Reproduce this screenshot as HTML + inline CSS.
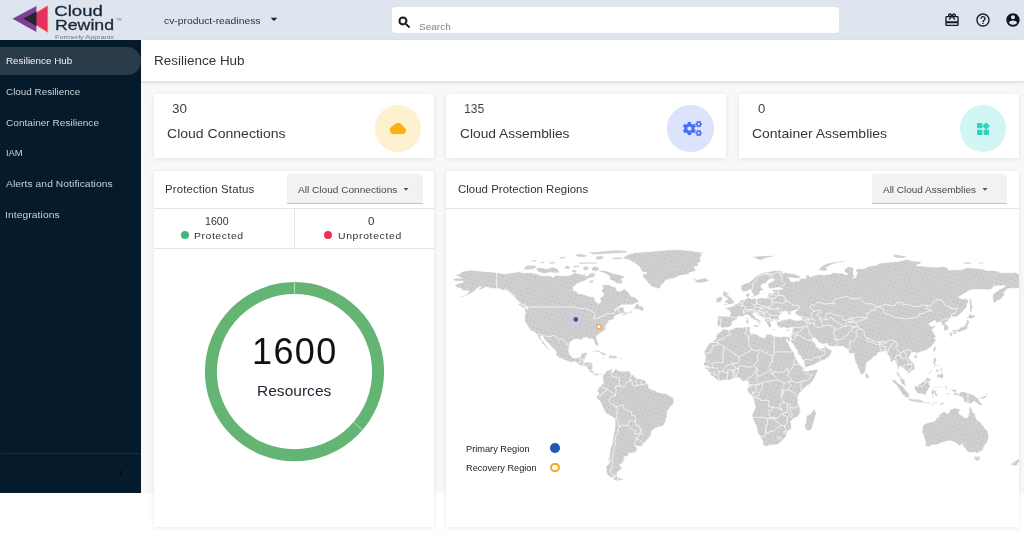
<!DOCTYPE html>
<html lang="en">
<head>
<meta charset="utf-8">
<title>Cloud Rewind - Resilience Hub</title>
<style>
*{box-sizing:border-box;margin:0;padding:0}
html,body{width:1024px;height:556px;overflow:hidden;background:#fff}
body{font-family:"Liberation Sans",sans-serif;color:#333;position:relative}
.abs{position:absolute}
.t{position:absolute;white-space:nowrap;line-height:1;transform-origin:0 0;will-change:transform}
#header{position:absolute;left:0;top:0;width:1024px;height:40px;background:#dfe5ee}
#sidebar{position:absolute;left:0;top:40px;width:141px;height:453px;background:#051b2b}
#main{position:absolute;left:141px;top:40px;width:883px;height:453px;background:#f8f8f8}
#titlebar{position:absolute;left:141px;top:40px;width:883px;height:41.5px;background:#fff;border-bottom:1px solid #e2e2e2;box-shadow:0 1px 3px rgba(0,0,0,.10)}
.card{position:absolute;background:#fff;box-shadow:0 1px 5px rgba(0,0,0,.09)}
.nav{position:absolute;left:6px;color:#c9d1d8;font-size:9px;white-space:nowrap;line-height:1;transform-origin:0 0;will-change:transform}
.circ{position:absolute;width:46.4px;height:46.4px;border-radius:50%}
.dd{position:absolute;background:#f2f2f2;border-bottom:1.3px solid #c4c4c4;border-radius:3px 3px 0 0}
svg{display:block}
</style>
</head>
<body>
<!-- ============ HEADER ============ -->
<div id="header">
  <svg class="abs" style="left:0;top:0;will-change:transform" width="130" height="40" viewBox="0 0 130 40"><defs><pattern id="lgdots" width="1.3" height="1.3" patternUnits="userSpaceOnUse"><circle cx=".65" cy=".65" r=".42" fill="#0c0c10"/></pattern></defs>
    <polygon points="26,18.8 47.8,5.6 47.8,32.4" fill="#e8305f" stroke="#f5a04a" stroke-width=".6"/>
    <polygon points="12.5,18.8 36.4,5.9 36.4,32" fill="#7d3f98"/>
    <polygon points="23.2,18.8 36.4,11.5 36.4,26" fill="#3a2f3c"/><polygon points="23.2,18.8 36.4,11.5 36.4,26" fill="url(#lgdots)"/>
    <text x="54.3" y="15.7" font-family="Liberation Sans, sans-serif" font-size="14" fill="#16283a" stroke="#16283a" stroke-width=".28" textLength="48.6" lengthAdjust="spacingAndGlyphs">Cloud</text>
    <text x="55" y="29.8" font-family="Liberation Sans, sans-serif" font-size="14" fill="#16283a" stroke="#16283a" stroke-width=".28" textLength="59" lengthAdjust="spacingAndGlyphs">Rewind</text>
    <text x="116.3" y="20.6" font-family="Liberation Sans, sans-serif" font-size="3.4" fill="#6a7683" textLength="5.2" lengthAdjust="spacingAndGlyphs">TM</text>
    <text x="55" y="38.9" font-family="Liberation Sans, sans-serif" font-size="5.3" fill="#6a727b" textLength="59" lengthAdjust="spacingAndGlyphs">Formerly Appranix</text>
  </svg>
  <span class="t" id="t_proj" style="left:164.40px;top:16.06px;font-size:9.5px;color:#2a3440;letter-spacing:0.000px;transform:scaleX(1.0877)">cv-product-readiness</span>
  <svg class="abs" style="left:266px;top:11px" width="16" height="16" viewBox="0 0 24 24" fill="#10202e"><path d="m7 10 5 5 5-5z"/></svg>
  <div class="abs" style="left:392px;top:7px;width:447px;height:26px;background:#fff;border-radius:4px"></div>
  <svg class="abs" style="left:397.4px;top:14.9px" width="15" height="15" viewBox="0 0 24 24" fill="#10181f"><path d="M15.5 14h-.79l-.28-.27A6.471 6.471 0 0 0 16 9.5 6.5 6.5 0 1 0 9.500 16c1.610 0 3.090-.59 4.230-1.570l.27.28v.79l5 4.990L20.490 19l-4.990-5zm-6 0C7.010 14 5 11.990 5 9.500S7.010 5 9.500 5 14 7.010 14 9.500 11.990 14 9.500 14z" stroke="#10181f" stroke-width="1.2"/></svg>
  <span class="t" id="t_search" style="left:418.80px;top:22.58px;font-size:9px;color:#7d8288;letter-spacing:0.000px;transform:scaleX(1.1146)">Search</span>
  <svg class="abs" style="left:943.6px;top:11.6px" width="16" height="16" viewBox="0 0 24 24" fill="#0f1d2b"><path d="M20 6h-2.180c.11-.31.18-.65.18-1a2.996 2.996 0 0 0-5.500-1.650l-.5.67-.5-.68C10.960 2.540 10.050 2 9 2 7.340 2 6 3.340 6 5c0 .35.07.69.18 1H4c-1.110 0-1.990.89-1.990 2L2 19c0 1.110.89 2 2 2h16c1.110 0 2-.89 2-2V8c0-1.110-.89-2-2-2zm-5-2c.55 0 1 .45 1 1s-.45 1-1 1-1-.45-1-1 .45-1 1-1zM9 4c.55 0 1 .45 1 1s-.45 1-1 1-1-.45-1-1 .45-1 1-1zm11 15H4v-2h16v2zm0-5H4V8h5.080L7 10.830 8.620 12 11 8.760l1-1.360 1 1.360L15.380 12 17 10.830 14.920 8H20v6z"/></svg>
  <svg class="abs" style="left:974.8px;top:11.8px" width="16" height="16" viewBox="0 0 24 24" fill="#0f1d2b"><path d="M11 18h2v-2h-2v2zm1-16C6.480 2 2 6.480 2 12s4.480 10 10 10 10-4.480 10-10S17.520 2 12 2zm0 18c-4.410 0-8-3.590-8-8s3.590-8 8-8 8 3.590 8 8-3.590 8-8 8zm0-14c-2.210 0-4 1.790-4 4h2c0-1.100.9-2 2-2s2 .9 2 2c0 2-3 1.750-3 5h2c0-2.250 3-2.500 3-5 0-2.210-1.790-4-4-4z"/></svg>
  <svg class="abs" style="left:1005px;top:11.8px" width="16" height="16" viewBox="0 0 24 24" fill="#0b1826"><path d="M12 2C6.480 2 2 6.480 2 12s4.480 10 10 10 10-4.480 10-10S17.520 2 12 2zm0 3c1.660 0 3 1.340 3 3s-1.340 3-3 3-3-1.340-3-3 1.340-3 3-3zm0 14.200c-2.500 0-4.710-1.280-6-3.220.03-1.990 4-3.080 6-3.080 1.990 0 5.970 1.090 6 3.080-1.290 1.940-3.500 3.220-6 3.220z"/></svg>
</div>

<!-- ============ SIDEBAR ============ -->
<div id="sidebar">
  <div class="abs" style="left:0;top:6.6px;width:140.5px;height:28.4px;background:#2a3b4a;border-radius:0 14.2px 14.2px 0"></div>
  <span class="nav" id="n1" style="top:16.61px;color:#f2f4f6;left:5.80px;font-size:9.2px;letter-spacing:0.000px;transform:scaleX(1.0713)">Resilience Hub</span>
  <span class="nav" id="n2" style="top:48.11px;left:6.00px;font-size:9.2px;letter-spacing:0.000px;transform:scaleX(1.0775)">Cloud Resilience</span>
  <span class="nav" id="n3" style="top:78.91px;left:6.00px;font-size:9.2px;letter-spacing:0.000px;transform:scaleX(1.0969)">Container Resilience</span>
  <span class="nav" id="n4" style="top:108.51px;left:6.00px;font-size:9.2px;letter-spacing:0.000px;transform:scaleX(1.0218)">IAM</span>
  <span class="nav" id="n5" style="top:140.21px;left:6.00px;font-size:9.2px;letter-spacing:0.053px;transform:scaleX(1.1200)">Alerts and Notifications</span>
  <span class="nav" id="n6" style="top:170.71px;left:5.00px;font-size:9.2px;letter-spacing:0.075px;transform:scaleX(1.1200)">Integrations</span>
  <div class="abs" style="left:0;top:412.5px;width:141px;height:0;border-top:1px dotted #2a3a47"></div>
  <svg class="abs" style="left:115px;top:427px" width="12" height="12" viewBox="0 0 24 24" fill="#02080d"><path d="M15.410 7.410 14 6l-6 6 6 6 1.410-1.410L10.830 12z"/></svg>
</div>

<!-- ============ MAIN ============ -->
<div id="main"></div>
<div id="titlebar"></div>
<span class="t" id="t_title" style="left:153.60px;top:55.24px;font-size:12px;color:#2f3439;letter-spacing:0.013px;transform:scaleX(1.1200)">Resilience Hub</span>

<!-- stat cards -->
<div class="card" style="left:154px;top:94.4px;width:280px;height:63.2px"></div>
<div class="card" style="left:446.3px;top:94.4px;width:280px;height:63.2px"></div>
<div class="card" style="left:739.2px;top:94.4px;width:279.6px;height:63.2px"></div>

<span class="t" id="t_30" style="left:172.40px;top:101.80px;font-size:13px;color:#3a3d41;letter-spacing:-0.000px;transform:scaleX(1.0367)">30</span>
<span class="t" id="t_cc" style="left:167.20px;top:126.70px;font-size:13px;color:#34373b;letter-spacing:-0.000px;transform:scaleX(1.0796)">Cloud Connections</span>
<div class="circ" style="left:375.1px;top:105.3px;background:#fef1d0"></div>
<svg class="abs" style="left:383px;top:116px" width="30" height="24" viewBox="0 0 30 24"><path d="M13.6 7.6 L16.8 7.6 L22.3 13.2 L22.5 15.4 L20.7 17.5 L9.6 17.5 L7.8 15.9 L7.5 12.6 L9.2 10.6 Z" fill="#fbb116" stroke="#fbb116" stroke-width="1.1" stroke-linejoin="round"/></svg>

<span class="t" id="t_135" style="left:464.30px;top:101.80px;font-size:13px;color:#3a3d41;letter-spacing:0.000px;transform:scaleX(0.9307)">135</span>
<span class="t" id="t_ca" style="left:459.80px;top:126.70px;font-size:13px;color:#34373b;letter-spacing:0.000px;transform:scaleX(1.0597)">Cloud Assemblies</span>
<div class="circ" style="left:667.4px;top:105.3px;background:#dbe3fd"></div>
<svg class="abs" style="left:683px;top:121px" width="19" height="15.2" viewBox="0 0 640 512" fill="#4b6ef5"><path d="M512.100 191l-8.200 14.300c-3 5.300-9.400 7.500-15.100 5.400-11.800-4.400-22.600-10.700-32.100-18.600-4.600-3.800-5.800-10.500-2.800-15.700l8.200-14.300c-6.900-8-12.300-17.300-15.900-27.400h-16.500c-6 0-11.200-4.300-12.200-10.300-2-12-2.100-24.600 0-37.100 1-6 6.200-10.400 12.200-10.400h16.500c3.600-10.100 9-19.400 15.900-27.400l-8.200-14.300c-3-5.200-1.900-11.900 2.800-15.700 9.500-7.900 20.400-14.200 32.100-18.600 5.700-2.100 12.100.1 15.100 5.400l8.200 14.300c10.500-1.900 21.200-1.900 31.700 0L552 6.300c3-5.300 9.400-7.500 15.100-5.400 11.800 4.400 22.600 10.700 32.100 18.600 4.600 3.800 5.800 10.500 2.800 15.700l-8.200 14.300c6.900 8 12.300 17.300 15.900 27.400h16.500c6 0 11.200 4.300 12.200 10.300 2 12 2.100 24.600 0 37.100-1 6-6.200 10.400-12.200 10.400h-16.500c-3.600 10.100-9 19.400-15.900 27.400l8.200 14.300c3 5.200 1.900 11.900-2.800 15.700-9.500 7.900-20.400 14.200-32.100 18.600-5.700 2.100-12.100-.1-15.100-5.400l-8.200-14.300c-10.400 1.900-21.200 1.900-31.700 0zm-10.500-58.800c38.500 29.600 82.400-14.300 52.800-52.800-38.500-29.700-82.400 14.300-52.800 52.800zM386.300 286.100l33.700 16.800c10.100 5.800 14.500 18.100 10.500 29.100-8.900 24.200-26.400 46.400-42.600 65.800-7.400 8.900-20.200 11.100-30.300 5.300l-29.100-16.800c-16 13.700-34.600 24.600-54.900 31.700v33.600c0 11.600-8.300 21.600-19.700 23.600-24.600 4.200-50.400 4.400-75.900 0-11.500-2-20-11.900-20-23.600V418c-20.300-7.200-38.900-18-54.900-31.700L74 403c-10 5.800-22.900 3.600-30.300-5.300-16.200-19.400-33.300-41.600-42.200-65.700-4-10.900.4-23.200 10.500-29.100l33.300-16.800c-3.900-20.900-3.900-42.400 0-63.400L12 205.800c-10.100-5.800-14.600-18.100-10.500-29 8.900-24.200 26-46.400 42.200-65.800 7.400-8.900 20.200-11.100 30.300-5.300l29.100 16.800c16-13.700 34.600-24.600 54.900-31.700V57.100c0-11.500 8.200-21.500 19.600-23.500 24.600-4.200 50.500-4.400 76-.1 11.500 2 20 11.900 20 23.600v33.600c20.300 7.200 38.900 18 54.900 31.700l29.100-16.800c10-5.800 22.900-3.600 30.300 5.300 16.200 19.400 33.200 41.600 42.100 65.800 4 10.900.1 23.200-10 29.100l-33.700 16.800c3.900 21 3.900 42.500 0 63.500zm-117.600 21.100c59.200-77-28.700-164.900-105.700-105.700-59.200 77 28.700 164.900 105.700 105.700zm243.400 182.700l-8.200 14.300c-3 5.300-9.400 7.500-15.100 5.400-11.800-4.400-22.600-10.700-32.100-18.600-4.600-3.800-5.800-10.500-2.800-15.700l8.200-14.300c-6.900-8-12.300-17.300-15.900-27.400h-16.500c-6 0-11.200-4.300-12.200-10.300-2-12-2.100-24.600 0-37.100 1-6 6.200-10.400 12.200-10.400h16.500c3.600-10.100 9-19.400 15.900-27.400l-8.200-14.300c-3-5.200-1.900-11.900 2.800-15.700 9.500-7.900 20.400-14.200 32.100-18.600 5.700-2.100 12.100.1 15.100 5.400l8.200 14.300c10.500-1.900 21.200-1.900 31.700 0l8.200-14.300c3-5.300 9.400-7.500 15.100-5.400 11.800 4.400 22.600 10.700 32.100 18.600 4.600 3.800 5.800 10.500 2.800 15.700l-8.200 14.300c6.900 8 12.300 17.300 15.900 27.400h16.500c6 0 11.200 4.300 12.200 10.300 2 12 2.100 24.600 0 37.100-1 6-6.200 10.400-12.200 10.400h-16.500c-3.600 10.100-9 19.400-15.900 27.400l8.200 14.300c3 5.200 1.900 11.900-2.800 15.700-9.500 7.900-20.400 14.200-32.100 18.600-5.700 2.100-12.100-.1-15.100-5.400l-8.200-14.300c-10.400 1.900-21.200 1.900-31.700 0zM501.600 431c38.500 29.600 82.400-14.300 52.800-52.800-38.500-29.600-82.400 14.300-52.800 52.800z"/></svg>

<span class="t" id="t_0" style="left:757.50px;top:101.80px;font-size:13px;color:#3a3d41;letter-spacing:0.000px;transform:scaleX(1.0091)">0</span>
<span class="t" id="t_cna" style="left:752.30px;top:126.70px;font-size:13px;color:#34373b;letter-spacing:0.000px;transform:scaleX(1.0745)">Container Assemblies</span>
<div class="circ" style="left:959.8px;top:105.3px;background:#d2f6f3"></div>
<svg class="abs" style="left:975.2px;top:120.6px" width="16" height="16" viewBox="0 0 24 24" fill="#2ed3c3"><path d="M13 13v8h8v-8h-8zM3 21h8v-8H3v8zM3 3v8h8V3H3zm13.660-1.310L11 7.340 16.660 13l5.660-5.660-5.660-5.650z"/></svg>

<!-- Protection status panel -->
<div class="card" style="left:154px;top:171px;width:280px;height:356px"></div>
<span class="t" id="t_ps" style="left:165.30px;top:184.57px;font-size:10.2px;color:#2f3337;letter-spacing:0.128px;transform:scaleX(1.1200)">Protection Status</span>
<div class="dd" style="left:287px;top:174.4px;width:135.7px;height:30px"></div>
<span class="t" id="t_dd1" style="left:297.70px;top:184.86px;font-size:9.5px;color:#44484c;letter-spacing:0.000px;transform:scaleX(1.0622)">All Cloud Connections</span>
<svg class="abs" style="left:398px;top:181.3px" width="16" height="16" viewBox="0 0 24 24" fill="#555"><path d="m8.200 10.400 3.800 4.200 3.800-4.200z"/></svg>
<div class="abs" style="left:154px;top:208px;width:280px;height:1px;background:#e6e6e6"></div>
<div class="abs" style="left:154px;top:248px;width:280px;height:1px;background:#e6e6e6"></div>
<div class="abs" style="left:293.5px;top:208px;width:1px;height:40px;background:#e6e6e6"></div>
<span class="t" id="t_1600s" style="left:204.80px;top:217.28px;font-size:10.3px;color:#2f3337;letter-spacing:0.000px;transform:scaleX(1.0296)">1600</span>
<div class="abs" style="left:181px;top:230.6px;width:8px;height:8px;border-radius:50%;background:#45b57f"></div>
<span class="t" id="t_prot" style="left:194.30px;top:231.73px;font-size:9.3px;color:#2f3337;letter-spacing:0.505px;transform:scaleX(1.1200)">Protected</span>
<span class="t" id="t_0s" style="left:368.00px;top:217.28px;font-size:10.3px;color:#2f3337;letter-spacing:0.000px;transform:scaleX(1.1200)">0</span>
<div class="abs" style="left:324.3px;top:230.6px;width:8px;height:8px;border-radius:50%;background:#e8305a"></div>
<span class="t" id="t_unprot" style="left:337.60px;top:231.73px;font-size:9.3px;color:#2f3337;letter-spacing:0.577px;transform:scaleX(1.1200)">Unprotected</span>

<svg class="abs" style="left:194px;top:272px" width="200" height="200" viewBox="194 272 200 200">
  <circle cx="294.5" cy="371.7" r="83.6" fill="none" stroke="#64b473" stroke-width="12"/>
  <line x1="294.5" y1="296" x2="294.5" y2="281" stroke="#d9eedd" stroke-width=".7"/>
  <line x1="353" y1="421.7" x2="363" y2="430.2" stroke="#d9eedd" stroke-width=".7"/>
</svg>
<span class="t" id="t_1600" style="left:252.40px;top:334.23px;font-size:36px;color:#111;letter-spacing:1.369px">1600</span>
<span class="t" id="t_res" style="left:257.40px;top:383.38px;font-size:15.5px;color:#222a33;letter-spacing:0.026px">Resources</span>

<!-- Cloud protection regions panel -->
<div class="card" style="left:446.3px;top:171px;width:572.5px;height:356px;overflow:hidden" id="mapcard">
<svg class="abs" style="left:0;top:0" width="572.5" height="356" viewBox="446.3 171 572.5 356">
<defs><pattern id="dots" width="4.4" height="4.4" patternUnits="userSpaceOnUse" patternTransform="rotate(18)"><circle cx="1" cy="1" r=".52" fill="#a9adba"/></pattern><path id="land" d="M451.9,279.4L457.7,277.9L462.2,278.4L459.4,276.9L454.9,274.8L460.2,273.8L462.1,271.6L470.9,269.9L478.6,270.8L485.3,271.4L493.6,271.9L497.0,272.8L500.3,272.9L505.3,273.9L510.4,272.9L517.0,272.1L518.7,271.3L523.7,272.9L530.4,272.4L537.1,273.8L541.3,274.9L540.4,275.7L548.8,275.6L552.1,276.2L553.0,277.7L554.6,276.2L555.5,274.9L562.2,275.7L568.8,275.7L570.5,274.6L572.2,274.9L573.0,273.4L574.7,272.8L577.2,273.1L579.7,273.8L582.2,274.3L585.6,274.1L585.6,276.2L588.1,275.7L590.6,272.9L594.7,272.8L595.9,274.1L593.9,276.2L593.9,277.6L589.7,278.1L587.2,279.4L584.7,280.9L581.4,282.1L578.0,283.4L575.2,285.4L573.4,287.7L574.0,290.7L577.2,290.9L578.0,293.7L582.2,293.7L587.2,295.4L590.6,296.5L595.1,296.9L595.2,300.4L597.2,302.4L598.6,303.4L600.6,302.9L600.9,300.4L599.8,297.9L603.1,296.2L604.3,294.0L601.4,291.2L602.8,288.7L602.3,284.9L603.9,284.6L609.3,284.7L613.1,286.6L616.0,287.1L616.5,289.6L618.5,291.2L622.3,290.7L624.3,288.2L627.3,290.7L629.3,293.2L631.5,296.2L635.7,297.4L636.9,298.7L639.0,301.2L639.5,302.2L637.4,303.0L634.2,303.9L632.3,305.0L627.3,304.9L621.5,305.0L619.8,306.5L617.3,308.2L614.8,310.0L618.1,308.0L621.5,306.8L625.2,307.2L624.0,308.7L624.2,310.0L624.8,311.5L626.5,312.2L629.8,312.5L631.8,310.3L632.7,312.0L630.7,313.3L626.5,314.3L623.0,316.2L622.0,314.8L624.8,313.2L622.3,313.3L620.6,314.0L617.3,315.3L615.3,316.0L614.3,317.5L614.6,318.8L615.6,319.2L613.1,319.7L608.9,320.8L608.9,322.5L607.3,324.0L606.4,325.5L605.6,327.1L606.3,329.8L604.3,330.8L602.3,332.1L600.1,333.5L597.2,335.6L596.6,337.9L597.9,341.3L598.9,343.9L598.4,346.4L597.1,346.6L595.9,344.9L594.4,342.3L594.4,340.3L592.2,338.6L589.9,339.1L588.1,337.9L585.6,337.9L583.0,338.3L583.4,340.1L580.9,339.9L578.0,339.3L575.5,339.3L573.9,339.9L571.3,341.4L569.8,342.9L570.2,345.4L569.3,348.6L569.2,351.2L570.0,353.9L571.5,356.2L572.7,357.4L574.7,358.2L577.5,357.7L579.7,357.6L581.0,356.1L581.5,353.7L584.7,352.7L587.2,352.7L587.6,353.9L586.4,355.7L585.9,358.1L585.1,359.4L584.2,361.9L585.6,362.2L588.9,362.1L591.4,362.2L593.4,363.6L593.1,366.0L592.7,368.5L592.7,370.2L593.9,371.9L595.2,373.2L597.2,373.9L599.3,372.7L600.9,372.9L603.1,374.2L603.4,375.2L602.4,376.5L601.9,374.7L599.8,373.7L598.4,374.9L598.3,376.4L596.4,375.7L594.2,374.9L592.9,374.2L592.7,372.9L591.1,372.4L589.4,371.9L589.2,370.2L587.7,368.2L586.4,366.9L584.7,366.5L582.5,365.9L580.0,365.2L578.4,364.2L575.9,361.9L574.2,361.6L571.8,362.4L568.8,361.6L565.8,360.6L562.5,358.9L559.7,357.9L557.1,356.1L556.1,354.4L556.6,352.6L555.5,350.6L553.0,347.9L550.5,345.9L549.8,344.1L548.0,342.8L546.3,341.1L544.6,339.4L543.4,336.6L540.9,335.8L540.8,337.3L542.1,339.4L544.1,341.9L545.8,344.4L547.5,347.3L549.6,349.9L548.5,350.3L545.4,347.3L544.9,345.3L541.8,343.1L541.9,341.1L539.1,338.3L537.8,335.9L536.9,334.5L534.8,332.0L531.2,331.1L528.9,327.6L527.9,325.6L525.7,322.8L524.9,321.3L525.2,318.7L524.6,317.0L525.4,313.7L525.4,311.5L524.2,308.0L527.1,308.3L527.9,309.5L527.4,307.0L525.4,305.7L522.9,304.5L520.4,303.7L518.7,301.2L516.2,299.0L514.9,297.5L512.9,295.7L511.2,294.0L508.7,291.7L506.2,290.4L502.8,290.7L499.5,289.1L496.2,288.7L492.0,288.7L488.6,287.4L485.3,287.6L482.8,289.1L479.1,290.1L479.4,287.9L482.0,286.7L478.6,287.4L476.1,289.6L474.8,291.2L471.1,293.4L467.7,295.4L463.6,296.7L460.2,297.4L457.2,297.9L461.1,296.0L464.4,295.4L467.7,293.7L469.4,291.0L466.9,290.9L464.4,290.7L461.9,290.4L461.9,288.7L457.7,287.9L456.4,286.7L455.2,285.4L457.2,283.7L461.1,282.9L463.6,282.1L463.2,281.1L460.2,281.2L456.0,281.2L454.4,280.4ZM633.5,309.3L634.8,307.0L636.5,304.2L639.9,302.7L639.0,305.4L643.2,306.5L644.5,309.5L643.2,311.0L639.4,310.5L639.9,309.5L636.5,309.3ZM659.2,288.9L652.4,287.1L648.2,282.9L645.7,279.6L642.9,277.1L643.2,274.1L647.4,272.9L641.5,271.6L641.0,268.8L639.0,266.3L634.8,262.9L631.5,261.4L629.0,260.0L622.3,258.5L625.7,256.1L629.0,254.1L635.7,252.5L649.1,251.5L665.8,250.1L677.5,249.6L690.8,250.5L697.5,251.8L708.4,252.6L700.9,253.6L702.5,255.5L700.0,258.0L701.7,261.3L697.5,263.8L700.0,265.4L694.2,267.1L695.8,269.6L695.8,271.3L689.2,272.9L690.8,274.1L684.1,275.1L678.3,276.2L675.0,278.2L669.9,279.2L665.8,280.4L664.1,282.9L661.6,285.4L660.7,287.9ZM692.0,279.6L695.0,278.1L697.5,279.6L702.5,278.4L705.9,277.9L708.4,279.6L709.7,280.7L706.7,281.7L701.7,283.1L698.3,282.7L695.0,282.2L695.8,281.2L692.5,280.6L695.8,280.1ZM590.7,352.1L593.9,350.3L597.2,350.1L600.6,351.1L603.9,352.7L606.4,354.1L608.6,354.9L607.3,355.4L603.1,355.4L602.3,354.2L599.8,352.6L596.4,351.7L593.1,351.7ZM603.4,374.4L605.6,373.0L606.4,370.7L608.1,370.2L610.6,369.4L612.8,367.9L613.5,369.4L612.6,370.5L613.1,372.7L614.0,371.0L615.3,369.4L615.6,368.4L618.1,369.9L619.0,370.9L622.3,370.9L624.8,371.5L627.3,370.7L629.0,370.9L630.7,372.7L631.5,374.4L634.0,375.2L636.5,378.0L639.9,378.7L642.4,378.9L644.9,380.2L646.5,381.2L647.4,383.5L649.1,385.5L649.1,388.0L651.6,389.0L652.4,389.8L655.7,390.5L658.2,392.2L660.7,392.7L663.3,393.3L665.8,393.2L668.3,394.7L670.8,396.5L673.6,397.3L674.4,400.5L674.1,403.5L671.6,406.0L669.9,408.1L668.3,410.1L667.4,412.6L667.4,416.8L666.3,419.3L665.8,421.8L664.1,424.8L662.4,426.6L659.9,426.7L657.4,427.7L654.9,428.7L652.4,430.6L651.4,432.6L651.4,435.4L649.4,437.6L647.4,440.1L645.4,442.0L643.2,444.7L641.5,446.4L638.7,446.5L636.0,445.9L635.0,445.0L637.0,447.5L637.7,449.2L636.2,452.0L632.3,453.2L629.0,453.2L628.5,455.9L624.8,456.7L624.0,458.3L626.2,459.2L624.0,460.5L623.1,463.3L620.1,464.7L619.8,465.8L622.6,467.0L622.3,468.7L619.5,470.8L617.6,472.5L617.3,474.1L618.3,475.6L616.5,475.8L614.3,476.3L614.0,478.0L611.5,477.5L609.8,476.3L607.6,475.0L606.6,471.6L606.4,468.3L606.3,466.2L608.9,464.2L609.8,461.7L610.6,459.2L609.3,458.0L609.8,454.2L610.3,450.4L611.0,447.5L612.8,443.4L613.1,438.4L613.5,435.1L614.8,430.9L615.1,426.7L615.3,422.6L615.1,418.9L613.1,417.3L609.8,415.4L606.9,413.9L605.1,411.4L603.6,408.5L601.9,405.1L600.6,402.1L599.3,400.1L597.2,398.5L596.7,396.3L598.4,394.2L599.3,392.8L597.4,392.2L597.6,390.2L598.8,388.5L598.9,387.2L600.8,386.3L601.4,384.3L603.1,384.2L603.6,382.2L603.1,379.4L603.3,377.4L602.4,376.5ZM722.7,329.0L723.7,328.8L727.6,329.8L729.3,330.1L732.6,329.0L735.1,327.8L737.6,327.3L741.0,327.3L744.3,327.0L749.0,326.5L751.0,327.0L750.3,328.6L750.8,330.3L749.5,331.5L751.0,332.6L753.5,334.0L754.7,333.8L758.0,334.8L760.2,336.6L762.7,337.6L764.7,338.1L766.0,336.9L766.0,334.8L768.5,333.8L771.0,334.3L774.4,335.9L777.7,336.4L781.1,337.1L783.6,336.3L786.1,336.3L786.6,336.6L788.6,336.8L789.9,336.4L790.9,339.4L789.9,342.3L788.1,340.8L787.1,338.8L786.9,339.8L788.2,342.3L789.4,344.4L791.1,347.8L792.3,350.3L794.3,351.9L794.8,353.6L794.9,356.1L796.9,358.6L798.6,362.7L801.1,364.4L803.6,366.9L805.0,367.7L804.8,369.4L806.1,371.0L808.6,370.9L811.1,369.9L814.5,369.7L818.2,368.7L818.0,371.0L817.0,373.5L815.3,376.9L813.6,380.2L811.1,383.5L808.6,385.2L806.1,386.8L803.6,389.3L801.9,391.5L799.9,393.0L799.4,394.3L798.6,396.0L797.8,398.5L798.6,400.1L798.3,402.6L799.1,405.1L800.3,406.3L800.4,409.3L800.6,412.6L799.4,415.4L796.9,417.3L794.4,418.1L792.8,419.9L790.9,421.4L791.6,424.3L791.9,427.6L791.6,429.2L787.7,430.9L787.6,433.4L786.7,436.2L784.7,438.1L782.7,440.6L780.2,442.9L777.7,444.4L775.5,445.0L771.9,445.2L769.4,445.4L766.0,446.4L763.5,445.5L763.0,443.0L763.2,440.9L761.5,438.4L760.2,436.1L758.0,433.1L757.5,430.1L756.8,426.6L755.2,423.4L753.5,419.8L752.3,417.1L752.3,415.1L753.2,412.6L755.0,409.3L755.7,406.8L754.7,403.5L754.0,400.1L753.0,398.5L752.7,396.8L751.3,395.2L749.3,393.2L748.0,391.0L747.3,389.7L748.1,388.0L748.6,386.5L749.0,384.7L749.1,383.2L748.8,382.0L747.5,381.0L746.3,381.0L744.3,381.2L742.6,381.3L741.0,379.4L740.0,378.0L738.3,377.9L736.8,378.0L734.6,378.4L732.6,379.0L730.9,379.9L729.3,380.5L727.3,380.0L725.1,379.9L722.6,380.4L720.1,381.2L717.6,380.2L715.1,378.2L713.4,377.0L711.7,376.0L710.4,374.4L710.4,372.7L708.4,371.0L707.5,370.2L705.9,368.9L704.7,367.9L704.5,366.2L704.2,364.9L703.4,364.1L704.5,362.2L705.0,361.1L705.4,358.6L705.7,356.1L705.0,354.2L704.0,353.7L704.5,351.6L705.4,349.9L706.2,348.6L707.7,346.1L708.4,344.9L710.0,343.3L710.9,342.1L713.4,341.1L715.6,339.6L716.4,337.9L716.2,336.3L717.2,334.3L718.4,333.1L719.9,332.6L721.2,331.8L722.2,330.0ZM815.0,408.5L816.7,413.8L816.1,415.1L815.3,417.6L814.5,420.9L813.3,425.1L812.0,428.7L811.1,430.1L808.6,430.9L806.1,430.1L805.3,427.6L805.0,425.1L806.1,422.6L806.6,420.9L806.1,417.6L807.0,415.4L809.5,414.6L811.1,413.4L812.8,411.0L814.1,409.3ZM723.2,328.6L722.1,327.6L720.2,326.6L717.7,327.0L717.9,324.5L716.7,324.1L717.7,321.6L718.1,320.0L717.7,318.3L717.1,317.0L718.9,316.0L720.9,316.0L724.2,316.2L726.8,316.2L729.6,316.3L730.4,314.5L730.8,312.3L729.9,311.2L728.8,310.0L727.6,309.3L725.1,308.8L724.6,308.0L726.8,307.3L729.6,307.5L729.9,306.0L730.6,306.3L732.8,306.2L735.1,305.2L735.3,303.9L737.6,303.2L739.3,302.0L740.5,300.4L741.8,299.7L744.3,299.5L746.3,299.2L747.0,298.0L746.5,296.2L746.1,294.5L746.5,293.5L749.0,292.9L750.3,292.5L749.8,294.5L750.6,295.0L749.3,296.4L749.0,297.4L750.8,298.2L752.7,298.4L755.2,297.9L756.3,298.9L759.3,298.2L762.7,297.4L764.0,298.0L765.7,297.9L767.7,296.7L767.9,294.5L769.0,292.9L770.4,292.5L771.5,293.7L772.9,293.5L773.4,291.5L771.9,290.7L771.9,289.9L774.4,289.6L777.7,289.6L779.7,289.2L783.1,288.9L781.1,288.4L779.4,287.7L776.0,288.1L773.5,288.6L770.2,288.7L768.5,287.4L768.2,285.4L768.2,283.7L770.2,282.6L772.7,281.1L774.9,280.1L773.5,279.1L770.2,279.1L768.2,280.7L766.9,282.4L764.3,283.7L761.8,284.9L761.3,287.1L761.8,287.9L764.0,289.1L763.0,290.4L760.7,291.2L760.2,293.2L759.3,295.0L756.8,295.4L756.3,296.4L754.2,296.4L753.7,295.0L752.7,292.9L751.3,290.4L750.3,289.6L748.5,290.7L746.0,291.9L744.0,291.9L742.0,290.7L741.3,288.7L741.0,286.7L741.8,285.1L744.3,283.9L746.8,282.9L749.3,282.4L751.0,280.9L753.5,279.1L755.2,277.1L757.3,275.7L759.0,274.6L761.8,273.3L764.3,272.4L767.7,271.9L771.9,270.9L775.5,270.3L779.4,270.4L782.7,271.3L784.4,271.8L782.7,272.6L786.1,272.6L787.7,273.1L792.8,273.4L797.8,274.9L801.1,276.6L801.1,277.7L797.8,278.6L792.8,278.2L788.6,277.6L790.2,279.1L790.8,281.2L794.4,282.1L796.1,280.7L799.4,281.1L799.4,279.1L802.8,278.1L806.1,278.4L806.5,277.1L805.8,274.6L809.5,275.1L810.3,277.1L812.8,275.9L816.1,275.1L821.2,274.1L823.7,274.9L827.8,274.4L831.2,273.8L833.7,272.4L839.5,273.3L842.9,272.9L844.6,274.1L847.1,274.9L847.9,273.8L844.6,272.1L844.6,269.6L847.1,267.4L849.6,266.6L853.7,267.4L854.2,269.6L853.7,272.1L853.7,274.6L855.4,276.2L852.9,278.2L856.3,277.4L856.3,275.4L857.6,272.9L855.9,270.4L857.9,268.3L862.1,268.8L866.3,267.9L868.0,266.3L873.0,265.8L878.0,264.9L878.0,263.4L884.7,262.6L891.3,261.9L899.7,261.3L906.9,259.3L909.7,259.8L913.1,260.9L919.8,261.3L922.3,262.9L918.1,264.9L916.4,265.6L921.4,265.9L924.8,266.1L930.6,266.8L938.1,267.1L944.0,266.3L948.2,267.9L949.0,270.1L953.2,269.6L956.5,269.8L961.5,269.8L965.7,268.3L967.4,267.4L974.9,268.1L981.6,268.8L984.1,269.6L987.4,270.6L994.9,270.4L1000.0,271.6L1000.0,272.6L1005.0,272.6L1011.7,272.8L1016.7,272.1L1017.5,273.8L1021.7,272.4L1026.7,272.6L1033.4,273.9L1041.7,276.2L1050.1,278.7L1045.1,281.2L1036.7,279.6L1033.4,280.4L1031.7,281.2L1029.2,280.9L1031.7,283.7L1032.5,284.7L1026.7,285.7L1021.7,287.1L1017.5,288.7L1011.7,288.2L1007.5,288.9L1005.8,291.2L1004.1,292.4L1005.0,294.5L1003.3,297.0L1000.0,300.0L997.5,300.5L994.4,303.7L993.3,300.4L992.8,297.0L993.3,293.7L996.6,291.7L1000.0,289.1L1003.3,287.9L1005.8,285.7L1000.8,285.9L999.1,285.9L994.1,286.2L991.6,289.6L988.3,290.1L984.1,289.4L979.9,289.7L974.9,289.7L970.7,289.9L966.5,292.4L963.2,294.5L958.7,297.4L961.5,298.4L963.2,299.0L965.7,298.4L968.2,299.9L968.9,301.7L967.4,303.7L967.4,307.0L964.9,309.5L963.2,311.5L960.7,314.0L958.2,316.2L954.8,317.3L953.2,316.7L951.0,318.2L949.3,319.8L949.0,321.1L945.7,322.3L945.7,323.3L947.3,324.5L948.8,327.0L949.0,329.0L948.2,330.1L945.7,330.8L943.6,331.1L944.0,328.6L944.3,327.0L943.1,325.6L941.5,325.6L942.0,324.1L941.5,322.6L940.3,322.1L938.1,322.6L935.6,324.0L936.1,321.1L934.8,320.5L932.3,322.3L929.8,323.3L929.3,324.5L931.1,326.0L932.3,326.6L934.5,325.6L937.3,326.3L934.8,327.6L933.6,328.6L932.0,330.3L933.6,331.6L934.6,334.0L936.3,335.8L936.3,337.1L934.5,338.1L936.5,338.9L935.8,341.4L934.0,343.6L932.5,345.8L930.6,347.6L928.1,349.4L925.6,350.7L923.4,351.4L921.4,351.9L919.3,352.7L917.2,353.2L917.1,354.6L916.1,353.9L915.7,352.6L913.6,352.6L911.4,353.6L910.9,354.7L909.4,356.9L910.6,359.4L912.2,361.1L914.1,362.7L915.1,366.0L915.2,368.5L914.4,369.9L911.9,371.0L911.1,371.4L910.6,372.7L908.6,374.0L907.7,372.2L906.9,371.0L905.5,370.9L904.4,369.0L903.4,368.2L901.4,367.4L901.2,366.2L899.7,366.4L899.7,368.5L898.9,370.2L898.4,371.9L898.9,373.2L900.2,374.7L900.5,376.5L902.2,377.2L903.5,378.4L905.2,380.2L905.4,381.8L905.5,383.8L906.7,386.0L905.5,386.3L903.9,385.0L901.9,383.7L900.7,381.5L900.2,379.4L900.2,377.7L899.2,377.2L898.4,375.5L896.9,375.2L896.9,373.5L897.4,371.5L897.5,368.9L897.2,366.9L896.4,364.7L895.9,362.7L895.7,361.1L894.4,360.2L893.0,361.1L891.8,362.2L890.2,361.9L890.5,359.4L889.7,356.9L888.8,355.2L887.2,353.9L886.3,352.4L885.8,351.1L883.8,351.4L881.3,352.2L879.6,352.4L878.0,352.9L877.6,354.4L876.8,355.4L874.6,356.4L873.0,358.1L870.5,360.4L868.8,361.4L867.6,362.2L866.6,363.6L866.6,366.4L866.1,368.9L865.9,371.4L864.6,373.0L863.3,373.7L862.1,375.0L860.4,373.5L859.6,371.0L858.8,368.9L857.6,366.9L857.1,364.4L855.9,362.6L855.1,360.2L854.4,356.9L854.1,354.4L853.9,352.7L853.4,353.2L851.2,353.9L849.6,353.2L847.9,351.4L850.1,350.4L847.9,349.8L846.6,349.1L845.1,347.8L844.2,347.1L843.7,346.3L840.4,346.6L836.2,346.6L835.4,346.8L831.2,346.3L828.3,345.8L827.5,343.6L826.5,343.4L823.7,344.3L821.2,343.6L818.7,342.1L817.5,340.3L816.1,338.3L814.5,337.9L813.6,338.6L812.8,339.4L813.1,341.1L814.5,342.8L816.1,344.1L816.5,345.8L817.5,347.3L818.3,345.3L818.8,346.9L818.7,347.9L820.3,348.3L822.8,348.3L823.7,347.8L826.2,345.3L826.8,344.8L826.8,347.3L828.7,348.8L830.5,349.3L832.5,351.1L830.9,354.4L829.2,356.9L828.2,357.7L826.2,358.7L824.5,360.2L822.0,360.7L819.8,361.9L816.1,363.6L813.6,365.2L810.3,366.2L807.8,367.2L805.3,367.4L804.8,366.0L804.1,363.6L804.0,361.1L801.9,358.6L800.8,356.1L798.6,353.9L797.9,352.7L796.9,349.4L795.3,347.8L794.1,345.3L791.9,342.8L791.1,341.8L790.9,339.6L789.9,336.4L790.8,335.0L791.1,333.6L791.9,332.1L792.6,330.3L792.6,328.6L793.1,327.3L791.1,327.5L789.4,328.1L786.9,328.5L784.1,327.3L781.9,328.3L779.7,327.3L778.2,327.0L777.7,325.0L776.5,324.6L777.4,323.0L776.4,322.3L776.9,321.6L778.6,321.3L781.1,321.1L781.6,320.0L785.2,319.8L788.6,318.7L791.1,318.7L793.6,319.8L796.9,320.5L799.4,320.3L801.9,319.5L801.9,317.8L799.4,316.2L796.9,314.8L794.9,313.3L795.8,311.2L798.1,310.0L796.1,310.2L793.6,310.8L791.1,311.7L791.1,312.7L793.6,313.2L791.6,313.7L789.4,314.7L788.6,314.3L786.9,313.0L788.9,312.0L786.1,311.5L784.4,311.0L782.7,312.3L782.2,313.3L780.6,315.3L779.4,316.5L779.1,317.8L779.6,319.3L781.1,320.0L779.4,320.3L777.7,320.8L776.4,321.8L776.0,320.8L774.4,320.5L772.7,320.8L773.2,321.6L771.9,321.6L770.9,321.1L770.5,322.3L771.4,323.3L771.0,324.0L772.7,325.0L772.7,325.8L771.4,325.5L771.4,326.5L770.9,327.6L770.2,328.0L768.9,327.3L768.0,325.6L768.2,324.8L767.4,324.0L766.4,322.6L765.0,321.3L765.0,319.5L764.5,318.3L763.2,317.7L761.5,316.7L759.3,316.0L758.0,314.8L756.8,313.3L755.5,313.8L755.3,312.7L753.3,313.0L753.3,314.8L755.3,316.2L756.3,318.0L758.0,318.8L759.3,318.8L759.3,319.7L761.3,320.5L763.5,321.6L763.3,322.3L761.0,321.3L760.3,322.5L761.2,323.6L760.2,324.6L759.3,325.5L758.8,324.8L759.5,323.6L758.8,322.0L757.3,321.0L756.3,320.6L754.3,320.0L753.0,319.0L751.0,317.8L750.1,316.7L749.6,315.5L747.6,314.7L746.0,315.5L744.8,315.8L743.0,316.8L741.0,316.5L739.3,316.2L737.8,317.0L737.9,318.2L737.6,319.0L736.3,319.7L734.1,320.5L732.6,322.1L732.1,323.0L732.9,324.1L731.8,325.0L731.3,326.0L729.4,327.1L728.9,327.5L726.8,327.5L725.2,327.5L723.9,328.3ZM723.1,305.2L726.8,304.9L730.1,304.2L733.1,304.0L734.9,303.4L733.8,302.9L735.4,301.0L733.1,300.4L732.8,299.4L732.3,298.4L730.4,297.4L729.9,296.0L728.4,295.4L727.6,295.0L729.3,293.7L729.6,292.7L726.8,292.5L725.9,292.7L727.3,291.2L724.2,291.0L722.9,292.7L723.2,294.5L722.6,294.9L723.4,296.2L724.6,296.2L724.2,297.4L726.8,297.2L727.6,298.7L727.4,299.9L725.1,299.9L725.6,301.0L724.6,302.0L723.9,302.4L725.9,302.7L727.6,303.0L727.6,303.4L725.1,303.5ZM722.2,301.7L722.2,299.9L723.2,297.9L722.2,296.7L720.1,296.5L718.4,297.7L715.9,298.4L716.2,299.9L717.2,300.2L716.2,301.5L715.4,302.0L716.2,302.9L718.7,302.4L720.9,301.9ZM752.1,256.6L759.6,255.9L768.7,255.4L776.2,255.8L771.7,257.2L767.2,257.9L763.4,259.2L761.1,260.4L757.4,259.5L755.9,258.3L752.9,257.5ZM818.7,269.6L820.3,267.9L822.8,265.4L827.8,263.3L836.2,261.6L847.1,260.4L846.2,261.6L836.2,263.3L830.4,265.4L826.2,267.9L828.7,270.4L824.5,271.1L821.2,270.8ZM969.0,319.7L969.9,322.8L968.2,325.3L968.0,327.8L966.5,330.0L964.9,330.1L963.2,331.0L961.5,331.0L961.2,331.5L959.9,332.8L958.2,331.5L956.5,331.0L954.8,331.5L953.2,332.1L951.5,332.0L951.5,331.1L954.0,329.6L956.5,329.5L959.0,329.3L959.9,328.3L961.2,326.5L962.0,327.3L964.0,326.5L965.7,324.5L966.5,322.3L966.5,320.8L968.0,319.7ZM966.9,319.3L968.2,318.0L971.9,318.7L975.7,316.7L975.2,315.0L971.6,314.8L969.5,313.0L969.0,316.2L967.0,317.0L966.5,318.7ZM934.0,357.7L936.8,357.7L936.5,361.1L935.6,363.6L937.3,365.2L939.8,365.6L939.8,367.5L937.8,366.0L935.6,365.7L934.1,364.7L933.1,362.7L933.6,361.1ZM942.3,372.2L944.0,375.2L943.5,377.7L942.3,378.9L939.8,377.7L936.5,376.9L937.3,375.2L939.0,374.0L940.6,374.4ZM891.8,379.2L895.5,379.9L897.5,382.2L900.2,384.3L902.2,385.7L904.7,387.7L906.0,390.2L907.2,391.8L909.7,393.5L909.4,396.0L909.4,398.1L907.2,398.0L903.5,395.2L901.4,392.7L900.2,390.0L898.0,387.7L897.2,385.5L894.7,383.5L892.2,380.9ZM914.7,386.0L915.7,385.2L918.1,385.8L918.7,384.2L921.4,383.2L923.1,381.0L925.6,379.7L927.8,377.0L929.3,378.0L931.8,379.9L929.8,381.3L929.4,383.5L929.8,385.2L931.4,386.8L929.4,387.7L928.9,389.8L927.3,391.0L926.8,394.3L924.8,395.3L923.9,394.3L921.4,394.0L918.9,393.5L916.7,393.2L916.4,391.0L914.7,389.3L914.7,387.2ZM932.8,388.7L933.3,387.2L934.8,386.5L938.1,387.0L941.5,385.8L940.6,387.7L938.6,388.0L935.6,387.7L934.0,387.7L933.3,389.8L934.8,390.5L937.8,389.8L938.6,390.2L936.1,391.7L937.0,393.8L938.1,395.5L937.3,397.3L936.0,396.3L934.8,394.8L934.6,393.2L933.6,393.5L933.8,396.0L933.6,397.6L932.3,397.6L932.3,394.3L931.3,393.2L932.0,391.0ZM951.5,389.8L954.0,389.2L956.5,389.8L956.8,392.7L959.0,394.0L961.5,391.5L964.0,391.5L968.2,392.8L971.6,394.2L974.1,395.0L976.2,397.1L979.1,398.5L979.6,400.1L980.2,401.8L982.4,404.3L984.6,405.8L982.4,405.8L979.1,405.1L977.4,403.1L974.1,401.3L972.4,403.1L970.7,403.8L968.2,403.6L965.7,402.1L963.2,402.3L964.0,400.1L963.2,397.6L959.9,396.1L956.5,395.0L954.5,395.2L953.2,393.2L955.7,392.3L953.2,391.8L951.5,390.8ZM970.7,406.3L972.4,409.3L972.9,412.3L975.4,413.4L975.7,415.9L976.9,419.3L978.2,420.6L981.2,422.3L982.4,425.1L984.6,426.4L984.9,428.1L987.9,430.4L988.6,433.4L989.3,436.2L988.3,440.1L987.4,442.5L985.4,444.7L984.1,447.5L983.2,450.5L980.7,451.4L977.4,453.4L974.4,452.2L972.4,453.0L969.0,452.2L966.5,450.9L965.7,448.4L964.0,447.7L964.0,445.9L962.9,447.0L962.4,445.0L962.9,443.4L960.7,445.4L959.5,446.4L958.5,445.0L956.5,443.0L953.2,441.7L951.5,440.9L948.2,441.1L944.8,442.0L941.5,442.9L939.8,443.9L936.5,444.9L933.1,444.9L929.8,446.4L929.4,446.9L926.4,446.4L924.9,445.5L925.9,443.9L925.9,441.7L924.8,439.2L924.1,436.4L923.1,433.9L921.9,432.1L922.6,429.2L922.8,426.1L923.4,424.8L925.6,423.8L928.1,422.8L931.4,421.8L934.8,421.1L936.8,418.8L936.8,416.8L939.0,417.3L939.1,415.6L940.6,414.3L942.3,412.6L944.5,411.6L946.5,413.1L949.0,413.3L949.5,411.0L951.2,409.1L954.0,408.6L954.3,407.5L958.2,408.8L961.2,408.8L959.9,411.0L959.0,413.4L961.5,415.1L965.2,417.6L967.9,417.6L969.0,414.3L969.4,411.0L969.5,408.8L970.2,406.8ZM1021.2,456.0L1023.9,457.8L1021.7,460.5L1018.8,462.2L1018.0,464.8L1015.0,466.0L1011.3,465.2L1011.3,463.8L1014.2,461.7L1017.5,459.7L1020.0,457.5ZM1021.3,445.9L1024.2,448.9L1026.4,449.5L1026.7,451.0L1030.5,451.2L1029.7,453.7L1028.4,454.2L1027.5,456.4L1025.5,457.7L1024.7,456.4L1025.0,455.0L1023.0,453.9L1024.5,451.7L1024.2,450.0L1021.7,446.7ZM431.8,273.9L440.2,276.2L448.5,278.7L443.5,281.2L435.2,279.6L431.8,280.4ZM535.7,268.7L539.8,267.3L546.9,268.7L552.7,267.1L556.3,267.9L558.6,270.2L560.4,272.6L556.3,273.2L550.4,272.6L544.5,273.7L539.8,272.6L537.5,270.8ZM591.4,268.5L594.9,266.1L599.0,267.3L599.6,269.6L596.1,271.4L592.6,270.8ZM598.3,270.0L606.9,270.8L613.1,273.2L622.5,275.5L626.4,277.1L621.7,278.9L623.3,283.3L617.8,284.1L613.9,281.0L610.0,280.2L609.7,276.3L604.5,273.2L599.1,271.6Z"/></defs>
<use href="#land" fill="#cfcfcf"/>
<use href="#land" fill="url(#dots)" stroke="#fff" stroke-width=".8" stroke-linejoin="round"/>
<path d="M526.4,308.0L522.9,307.2L518.4,304.5L519.5,303.9L523.2,305.0L525.7,306.7ZM608.3,357.6L610.6,355.4L613.1,355.4L616.0,355.9L618.3,357.6L615.6,358.1L613.1,359.1L611.0,358.2ZM601.9,358.0L603.9,357.8L605.1,358.5L603.1,358.8ZM620.4,357.8L622.7,358.0L622.5,358.5L620.4,358.5ZM618.0,476.1L618.5,477.1L620.6,478.6L623.7,479.5L621.5,480.1L618.1,480.6L615.6,480.3L613.1,479.1L614.8,478.3L615.1,477.1L616.5,476.1ZM608.6,458.2L609.8,458.3L609.6,460.7L608.3,460.5ZM753.5,325.3L758.7,325.0L758.0,327.0L757.7,327.5L755.2,326.6L753.5,326.0ZM746.3,320.5L748.5,320.0L748.8,323.3L747.5,323.8L746.6,322.8ZM747.1,318.0L748.2,317.1L748.3,318.6L747.9,319.5L747.3,318.9ZM771.9,329.5L774.4,329.7L776.5,329.9L774.4,330.2L772.0,329.9ZM786.6,330.3L787.7,329.8L790.4,329.1L789.4,330.3L787.7,331.0ZM751.3,296.5L753.5,295.2L753.5,296.5L752.7,297.2ZM894.0,256.8L898.3,258.1L905.4,257.8L906.8,256.7L899.7,255.2L894.0,254.6ZM962.5,263.2L966.7,263.8L971.0,263.6L972.4,262.6L966.7,262.3ZM977.3,263.2L982.9,263.6L984.4,263.1L980.1,262.5ZM949.8,332.8L952.7,332.8L952.8,334.5L951.5,336.4L950.3,336.4L950.2,334.5L949.3,333.6ZM954.0,332.3L957.3,331.6L957.0,332.8L954.8,334.0L953.7,333.3ZM970.4,298.2L971.6,299.9L971.9,302.9L972.2,306.2L973.6,306.8L971.6,309.3L972.1,311.5L970.2,311.8L970.2,309.5L970.4,306.2L970.0,302.9L969.9,299.9ZM935.6,346.4L936.5,347.8L934.8,351.9L933.5,350.3L934.0,347.8ZM914.2,356.4L916.4,355.2L918.1,355.7L916.4,358.1L914.4,357.7ZM866.3,372.2L868.3,374.4L869.3,376.4L868.3,378.2L866.6,378.5L865.9,376.9L865.9,374.4ZM940.5,367.9L942.1,368.3L942.4,370.1L941.7,371.3L940.8,370.4L941.1,369.4ZM936.7,369.1L938.3,369.5L938.7,371.0L938.3,373.0L937.4,372.1L936.7,371.0ZM932.3,369.5L931.8,371.4L928.6,374.5L928.6,373.7L931.1,371.0ZM934.1,366.4L935.3,366.5L935.2,367.8L934.5,367.4ZM908.4,399.8L910.6,398.5L913.9,399.5L917.7,399.3L920.9,400.1L923.9,401.5L923.8,402.8L918.1,402.3L913.9,401.5L910.6,400.8ZM980.4,397.8L983.2,397.1L985.8,395.5L987.1,395.7L986.3,397.6L983.2,398.8L980.7,398.5ZM984.6,392.8L987.4,394.3L988.3,396.1L987.1,395.0ZM939.0,405.6L941.5,402.8L944.8,402.5L944.0,403.5L940.6,405.1ZM932.8,402.7L935.6,402.5L938.1,402.4L937.8,403.1L934.0,403.2ZM927.6,402.7L929.8,402.3L931.4,402.7L929.8,403.3L927.8,403.3ZM924.1,402.2L925.8,402.2L927.4,402.5L927.3,403.2L925.1,403.0ZM931.4,404.3L934.0,404.6L934.0,405.5L932.0,405.0ZM945.7,385.0L946.5,386.8L947.7,386.2L946.8,387.8L947.3,389.7L946.0,388.8L945.7,387.0ZM946.5,393.5L949.0,393.2L951.2,394.2L949.0,394.3L946.8,394.2ZM974.4,456.4L977.4,456.8L980.4,456.5L980.2,458.7L979.1,460.5L976.9,460.8L975.4,459.2L974.6,457.5ZM1030.9,270.3L1035.1,269.6L1037.6,270.4L1033.4,270.8ZM524.0,267.9L527.5,265.5L535.2,265.5L536.9,267.1L534.0,268.7L529.3,269.6L525.2,269.4ZM530.5,260.9L535.2,260.0L537.5,260.9L534.0,261.7ZM540.4,262.4L544.5,261.8L545.1,262.8L541.0,263.3ZM549.2,262.6L555.1,262.0L555.7,263.2L550.4,263.8ZM559.8,257.3L565.0,256.8L565.6,258.2L560.9,258.6ZM565.0,266.7L568.0,265.5L570.3,267.3L569.1,269.1L565.9,268.7ZM573.2,266.1L579.1,265.5L579.7,266.8L574.4,267.5ZM572.1,270.8L575.0,269.6L577.3,271.0L575.6,272.6L572.7,272.2ZM575.6,255.0L580.9,253.8L586.7,255.6L584.4,257.3L578.5,256.8ZM579.1,262.4L597.3,262.6L597.9,263.5L579.7,263.8ZM583.2,267.9L586.1,266.1L589.1,267.3L588.5,269.6L584.4,270.2ZM589.0,252.6L599.6,251.8L617.2,250.3L627.2,251.1L626.4,252.4L611.6,253.6L605.5,253.8L593.8,254.4ZM595.5,257.3L600.8,255.6L604.3,256.8L602.0,259.3L597.3,259.7ZM612.5,257.9L621.9,257.3L621.9,258.9L613.1,259.3ZM589.1,274.9L592.6,273.2L595.2,274.6L593.8,277.3L590.2,276.9ZM589.7,280.8L593.2,280.2L593.8,282.3L590.2,283.0Z" fill="#d2d2d2"/>
<path d="" fill="#fff"/>
<path d="M497.0,272.8L497.0,288.2L500.3,288.7L502.8,290.4L506.2,289.2L509.5,291.2L512.9,294.5L515.4,295.5L515.0,297.0M526.6,307.0L573.5,307.0L574.2,306.5L577.2,307.7L580.5,308.5L583.0,308.7L584.9,308.2L590.9,310.5L591.4,311.2L593.1,312.0L594.7,313.2L594.9,317.0L593.7,318.5L594.7,319.2L600.6,317.3L600.4,316.5L604.3,316.0L605.1,315.0L607.3,313.7L613.1,313.7L614.0,313.2L615.1,312.2L615.6,310.8L617.0,309.7L618.5,309.8L619.3,310.2L619.3,312.5L620.3,313.3L620.6,314.0M536.9,334.5L540.8,334.3L547.1,336.4L551.8,336.4L551.8,335.6L554.6,335.6L557.3,337.6L558.0,339.1L560.3,340.3L561.3,338.9L563.0,338.9L564.7,340.8L566.3,342.8L567.2,344.6L570.2,345.4M578.5,364.4L578.5,363.1L579.4,361.7L581.5,361.7L579.9,359.9L580.5,358.9L583.5,358.9L585.1,357.9M583.5,358.9L583.5,362.1L584.0,362.1M585.2,362.4L583.5,364.6L582.0,365.7M583.5,364.6L585.6,365.4L585.9,366.2M593.6,363.6L590.9,363.9L588.9,365.6L586.7,366.9M592.7,370.4L589.4,370.0M594.6,372.7L594.1,375.0M603.4,374.2L602.4,376.5M612.8,355.7L612.8,358.6M613.5,368.9L611.5,371.0L611.0,373.5L612.3,376.4L615.6,376.9L619.8,378.2L619.3,381.8L620.6,386.5M620.6,386.5L623.1,387.2L625.7,386.0L625.7,384.3L627.3,381.8L630.7,381.0L631.2,379.9M631.2,379.9L630.2,378.5L632.3,374.4M631.2,379.9L632.3,381.0L632.8,384.3L634.0,386.3L637.4,385.3L638.2,385.3M637.0,378.7L635.7,381.8L638.2,385.3M642.4,379.0L641.5,382.7L641.4,384.7M638.2,385.3L641.4,384.7L644.4,384.8L646.2,381.8M620.6,386.5L616.0,385.7L616.5,387.5L615.6,387.7L616.5,390.2L615.8,395.5M615.8,395.5L612.3,392.7L609.8,390.7L606.8,388.7M606.8,388.7L603.9,387.8L600.9,386.2M606.8,388.7L606.4,391.0L602.6,393.5L601.4,396.0L599.3,396.0L598.4,394.2M615.8,395.5L611.0,397.1L609.3,400.6L611.0,404.3L614.8,404.3L614.8,406.8L616.5,406.8M616.5,406.8L617.8,409.5L617.3,412.6L616.5,414.3L617.3,415.9L616.5,417.6L615.1,418.9M616.5,406.8L619.0,406.3L623.5,404.8L623.7,408.1L628.2,410.6L631.8,411.3L632.0,415.4L635.2,415.6L635.7,417.6L636.5,418.8L635.3,421.4M635.3,421.4L633.7,420.6L629.3,421.3L628.0,425.4M628.0,425.4L624.8,425.6L621.8,424.8L620.3,426.4M616.5,417.6L618.1,420.1L618.1,422.6L619.1,426.4L620.3,426.4M620.3,426.4L618.3,429.2L618.1,433.4L616.0,436.7L615.1,440.1L615.6,443.7L614.8,447.5L614.0,450.9L613.6,453.4L612.6,456.7L612.6,460.8L613.1,464.2L612.3,467.5L610.6,470.8L611.5,473.3L613.1,475.0L618.3,475.5M618.0,476.1L618.0,479.8M635.3,421.4L636.0,425.3L639.4,425.6L639.9,428.4L641.9,428.6L641.4,431.1M628.0,425.4L630.7,428.1L634.8,430.4L636.4,430.9L634.8,433.7L638.2,434.1L639.4,434.1L641.4,431.1M641.4,431.1L642.7,433.1L642.4,433.9L639.4,435.6L636.4,438.7M636.4,438.7L639.0,439.7L642.4,441.4L643.5,443.0L643.4,444.5M636.4,438.7L635.3,441.7L635.0,445.0M717.9,318.8L718.9,318.7L721.6,318.8L722.2,319.3L721.1,320.3L720.9,322.5L720.1,322.6L720.9,324.0L720.4,325.0L720.2,326.6M729.6,316.3L731.8,317.3L733.8,317.3L735.4,317.8L737.9,318.0M736.8,303.5L737.9,304.2L739.6,305.4L740.8,305.7L742.3,306.2L743.3,306.2L746.3,307.0L745.3,309.3L742.8,311.7L744.3,312.2L744.3,315.0L745.1,315.7M745.3,309.3L748.6,309.5L750.1,310.5L748.1,311.3L746.8,311.7L744.3,312.2M750.1,310.5L753.0,310.3L755.5,311.2L755.3,312.7M744.6,299.9L744.3,301.7L742.6,302.4L742.6,304.0L742.8,305.2L742.3,306.2M738.3,303.0L741.0,303.0L742.5,303.7L742.6,304.0M747.0,297.2L749.1,297.4M756.3,298.9L757.0,301.0L757.2,303.7L757.7,303.7L753.2,305.0L755.7,307.3L754.3,309.5L753.0,309.3L750.1,309.5L748.6,309.5M757.7,303.7L760.7,304.9L764.0,306.2L766.0,306.7L770.2,306.8L772.7,304.5L772.0,302.0L772.5,299.0L771.9,298.7L770.7,298.0L765.7,298.0M770.7,298.0L770.5,297.2L768.2,296.5M755.7,307.3L757.7,307.0L760.8,307.7L764.0,306.2M760.8,307.7L761.2,308.7L759.5,310.5L755.5,311.2M761.2,308.7L764.0,309.0L766.9,307.8L769.5,308.0L770.2,306.8M755.3,312.8L758.2,312.8L760.2,311.2L759.5,310.5M760.2,311.2L764.0,312.2L766.5,311.8L768.0,311.3L769.5,309.3L770.9,308.7L769.5,308.0M770.9,308.7L774.2,309.2L777.0,308.2L779.7,312.8L782.2,313.3M777.0,308.2L779.4,308.2L781.4,309.5L782.7,311.3L779.7,312.8M770.5,315.0L774.4,315.8L777.7,315.2L780.4,315.8M766.5,311.8L768.5,313.7L770.5,315.0L770.0,318.2L771.0,319.8L773.5,319.5L776.5,319.2L779.4,318.7M776.5,319.2L776.4,320.5M759.0,313.3L761.0,313.3L764.3,313.7L765.0,313.8L764.7,316.2L763.5,317.8M759.0,313.3L759.7,315.0L762.0,317.0L763.5,317.8M764.0,312.2L765.0,313.8M764.7,316.2L766.5,317.3L767.0,318.3L770.0,318.2M765.0,318.8L767.0,318.3L766.9,318.8L767.7,320.5L766.0,322.5M767.7,320.5L771.0,319.8M751.3,290.4L753.5,287.9L753.0,286.2L753.0,283.7L756.0,281.2L756.8,278.7L760.2,275.7L763.0,274.6L766.9,273.8M766.9,273.8L771.9,275.4L772.2,277.9L773.0,279.1M766.9,273.8L769.4,274.1L774.4,274.3L776.0,272.3L779.4,272.1L781.1,273.4L780.7,273.8L784.1,272.8M780.7,273.8L780.2,275.1L782.7,276.2L781.4,277.4L782.7,279.6L782.4,281.2L783.6,282.4L785.2,284.1L781.9,286.6L779.1,287.9M779.4,289.6L778.6,292.4L779.7,295.0M773.4,292.2L778.6,292.4M767.7,295.2L773.5,294.7L777.0,295.9L779.7,295.0M777.0,295.9L775.7,298.2L771.9,298.7M779.7,295.0L784.4,296.0L784.1,297.4L787.2,299.5L785.2,300.0L785.7,301.9M772.0,302.7L777.7,302.7L783.6,303.2L785.7,301.9M785.7,301.9L789.4,301.5L791.9,304.5L796.1,305.5L799.6,306.0L799.1,308.7L796.4,310.2M799.4,316.3L804.5,317.5L810.1,318.8L812.5,320.0L813.8,319.0M801.9,319.5L805.3,320.2L807.8,319.8L810.1,318.8M805.3,320.2L805.6,321.8L807.5,322.5M807.8,319.8L810.3,322.8L810.3,323.8M807.5,322.5L810.3,323.8L812.8,322.5L814.3,324.6M793.1,328.6L793.9,327.3L796.1,327.3L799.4,327.3L803.5,326.8L807.5,326.6L806.8,324.5L807.5,322.5M803.5,326.8L801.4,330.6L797.4,333.0L792.8,334.1L792.3,334.1M792.1,333.3L792.1,334.1L791.9,336.1L791.1,339.4M791.3,333.5L792.1,333.3L793.6,331.5L792.8,331.0M789.9,336.4L790.9,339.4M791.1,339.6L792.9,339.9L795.3,338.6L796.1,337.8L794.4,336.1L797.8,335.1L798.1,335.0L797.4,333.0M798.1,335.0L800.1,335.5L802.8,336.8L807.3,339.9L810.3,340.1L812.0,338.6L812.8,338.6M810.3,340.1L812.0,340.4L813.5,341.1M807.5,326.6L808.6,328.6L809.8,330.0L808.6,331.1L809.5,333.6L812.5,335.6L812.3,336.9L813.6,338.6M804.1,361.2L805.0,359.4L808.1,359.6L812.0,360.2L814.5,357.6L819.5,356.9L824.5,355.2L825.7,351.9L824.8,350.7M819.5,356.9L821.3,360.9M818.8,348.3L820.5,350.4L824.8,350.7L825.8,348.3L826.8,347.1M817.5,347.4L818.5,347.6M822.7,326.5L825.3,325.3L828.3,325.0L831.7,326.1L834.9,327.6L834.9,329.3L833.7,332.0L834.2,335.3L835.9,336.4L834.4,338.9L837.5,341.6L838.4,343.4L837.5,344.4L835.5,346.6M834.4,338.9L837.0,339.6L839.5,339.4L843.4,338.8L844.1,336.6L847.1,335.6L848.7,333.6L849.6,332.0L851.6,330.6L852.2,328.1L857.1,326.6L857.8,326.6M834.9,329.3L837.9,329.3L840.4,328.0L843.7,326.3L845.9,326.6L848.7,326.1L850.4,324.8L852.1,325.5L852.4,327.5L854.6,326.3L857.8,326.6M846.6,349.1L849.6,348.3L851.2,347.9L849.6,345.3L849.9,342.3L852.9,341.6L855.3,338.8L857.1,336.9L857.4,334.5L856.3,333.3L856.3,330.8L859.6,329.0L862.6,329.5M857.8,326.6L859.6,328.6L862.6,329.5L864.6,331.5L864.3,334.5L865.4,336.9L868.0,338.3M868.0,338.3L866.4,340.6L869.6,342.1L873.0,342.9L876.3,344.3L879.8,344.6L879.8,342.1M868.0,338.3L871.3,339.9L874.6,341.3L877.1,341.9L879.8,342.1L881.0,341.9L883.0,341.4L885.5,341.9L885.8,342.3L888.8,340.8L892.2,339.9L895.2,341.6M881.0,341.9L881.3,343.1L881.3,343.9L886.3,343.9L886.3,342.8L885.8,342.3M895.2,341.6L893.4,343.3L891.3,345.3L890.5,347.4L888.5,348.6L888.5,351.6L887.3,353.1L886.8,354.1M881.3,352.2L881.0,348.1L879.8,347.3L880.3,344.6L882.7,345.3L882.7,346.4L886.8,346.8L885.0,348.6L885.5,350.3L886.8,349.1L887.3,353.1M895.2,341.6L897.5,342.8L897.5,345.6L895.7,347.8L897.9,349.9L898.9,351.9L901.7,353.2L899.9,354.7M899.9,354.7L896.4,355.7L895.9,358.6L897.4,361.1L896.7,363.6L898.4,367.7L899.0,369.4L897.5,371.4M899.9,354.7L900.5,356.1L901.7,356.1L901.4,358.9L903.0,358.6L905.5,357.9L907.6,359.6L907.7,361.6L909.1,362.7L908.9,364.7M908.9,364.7L904.7,364.7L903.9,366.0L904.5,368.9M899.9,377.9L901.5,379.0L903.2,378.2M901.7,353.2L903.4,351.2L904.7,352.6L907.2,354.6L906.4,356.1L908.4,357.7L910.6,360.2L912.2,362.7L912.2,364.2L908.9,364.7M912.2,364.2L912.2,368.0L909.4,369.2L910.1,370.4L907.2,371.2M903.4,351.2L906.4,350.7L908.6,349.8L911.1,350.6L910.7,351.9L913.1,352.7M915.7,385.2L917.2,387.0L919.8,386.0L923.1,386.2L924.8,384.2L925.8,381.5L928.9,381.5M923.3,380.9L924.4,381.8L925.3,380.4M968.2,392.8L968.2,403.6M941.3,403.8L941.8,404.5M879.3,306.7L883.0,309.0L884.7,312.0L884.7,313.3L891.3,314.8L893.7,317.3L899.7,317.7L907.2,319.0L912.2,318.0L917.1,317.5L919.6,315.8L919.4,313.7L923.1,313.7L926.4,312.0L928.9,311.2L932.8,310.8L929.8,309.0L926.4,308.7L926.1,307.3L927.6,305.7M879.3,306.7L882.5,305.7L886.3,304.2L890.5,305.4L895.5,305.7L897.2,302.0L903.4,303.2L903.4,304.5L909.7,304.9L913.1,306.3L917.2,306.7L923.1,305.0L927.6,305.7M927.6,305.7L929.4,306.2L931.8,305.0L934.5,301.0L937.3,299.7L942.3,300.4L945.7,305.4L951.2,307.2L951.2,309.2L957.9,308.0L956.5,309.8L955.2,313.3L952.0,314.0L951.8,317.0L950.8,318.0M950.8,318.0L948.2,318.7L946.5,319.5L944.5,319.2L940.3,322.1M943.3,325.6L947.2,324.3M814.5,311.2L811.1,308.7L810.6,306.5L812.0,304.7L814.1,305.4L817.5,302.5L822.0,302.9L824.5,304.2L830.4,303.5L835.4,304.0L832.9,302.0L835.4,299.0L837.9,298.4L842.1,297.7L847.1,296.5L851.2,298.4L855.4,298.7L860.9,298.0L861.3,299.9L866.3,304.0L872.1,303.7L875.5,306.0L878.5,306.7L879.3,306.7M878.5,306.7L875.8,308.0L875.8,310.0L871.3,310.0L870.1,312.8L866.6,313.7L867.6,316.7L866.6,318.3M866.6,318.3L864.6,317.3L858.8,317.2L856.3,316.7L855.4,317.8L851.2,317.7L851.1,318.2L847.9,319.7L846.2,320.3L843.7,320.3L842.9,318.0L843.1,317.0L841.0,315.8L834.9,314.8L830.5,312.7L826.2,313.7L826.2,319.8L824.2,318.7L820.3,319.2M826.2,319.8L828.0,319.8L830.5,317.5L832.9,318.3L833.0,319.7L836.0,320.2L837.0,322.0L839.9,323.8L843.7,326.3M866.6,318.3L863.6,319.7L860.9,320.3L858.8,321.1L855.9,322.3L855.6,323.0L857.8,324.5L857.8,326.6M855.9,322.3L852.1,322.6L848.4,322.1L850.4,321.5L851.2,321.6L854.6,320.6L852.4,319.5L850.1,319.5L851.1,318.2M848.4,322.1L847.1,322.8L845.2,323.3L846.9,325.0L845.9,326.6M814.5,311.2L817.8,310.3L821.2,310.7L821.2,313.2L818.2,313.7L817.8,314.5L816.7,314.8L818.7,316.7L820.7,317.8L820.3,319.5L822.5,320.6L821.2,322.0L822.5,323.6L822.7,326.6L819.5,327.5L816.5,326.5L814.5,325.3L814.5,322.8L815.3,321.1L813.6,319.0L812.0,317.0L811.1,314.5L811.6,312.8L814.5,311.2M774.4,335.9L774.4,351.9L774.4,355.2L772.7,355.2L772.7,356.1L759.3,349.4L757.7,350.3L756.3,350.9L752.7,349.4L748.5,344.8L749.3,343.6L749.0,338.3L748.5,338.1L749.8,335.8L751.8,334.5L751.8,333.3M774.4,351.9L794.3,351.9M748.5,338.1L747.6,335.3L745.1,332.8L746.5,330.8L746.8,327.1M728.9,330.1L729.8,332.8L730.6,334.8L726.8,335.8L724.2,338.3L720.9,339.4L718.1,340.8L718.1,343.1L724.6,346.9L734.6,353.4L734.6,354.1L737.9,355.6L737.9,356.9L739.6,356.7L745.1,353.7L752.7,349.4M718.1,342.4L710.5,342.4M718.1,343.1L718.1,345.3L712.5,345.3L712.5,349.4L710.9,350.3L710.9,353.1L704.2,353.1M724.6,346.9L723.2,355.2L723.4,362.7L717.1,362.7L714.7,362.9L713.4,362.6L712.2,363.9L710.0,361.7L708.4,360.9L705.0,361.9M712.2,363.9L713.6,367.9L709.7,367.5L704.7,367.9M704.5,365.9L709.5,366.0L704.5,366.7M713.6,367.9L717.1,368.0L718.7,370.2L719.2,371.5L719.2,374.4L718.4,375.9L720.1,381.2M718.4,375.9L716.9,374.5L715.4,374.4L714.9,372.5L713.4,371.9L710.4,373.5M715.4,374.4L713.4,377.0M709.7,367.5L709.7,369.0L707.5,370.2M719.2,371.5L722.6,371.4L723.4,371.2L723.9,368.9L725.6,367.4L726.1,366.2L727.9,365.1L729.3,364.9L731.4,363.4L732.9,363.7L734.8,363.1L738.4,362.9L739.6,361.1L739.6,356.7M723.4,371.2L724.7,372.4L728.1,372.7L727.9,370.2L732.4,370.0L734.1,370.2L736.6,368.7L736.6,368.0L734.3,366.4L732.9,363.7M728.1,372.7L727.9,375.2L727.3,377.7L727.4,380.0M732.4,370.0L733.4,372.7L733.6,376.0L734.6,378.4M734.1,370.2L735.3,373.5L735.3,378.2M737.1,377.9L737.1,373.5L738.6,371.5L738.6,369.0L736.6,368.0M738.6,369.0L739.3,366.0L743.5,365.9L746.0,366.5L748.5,367.2L752.7,366.5L755.3,365.7L755.2,364.4L758.5,360.4L757.7,355.2L759.3,353.6L757.7,350.3M756.0,366.9L757.0,369.4L754.7,372.5L752.7,376.0L751.0,377.4L749.0,377.2L747.0,380.5M756.8,367.2L757.7,370.4L758.5,371.9L756.0,371.9L758.0,376.0M772.7,356.1L772.7,362.4L771.0,362.6L770.2,365.2L769.4,367.4L770.9,370.2L768.5,371.4L764.3,373.5L761.0,375.7L758.0,376.0L756.8,378.5L757.0,381.0L759.7,384.8M770.9,370.2L771.9,371.9L771.9,374.0L773.0,374.0L774.4,371.4L777.7,372.5L781.1,372.2L782.7,371.4L784.4,372.2L786.6,368.7L788.1,368.2L787.7,371.5L789.4,372.7M793.6,364.7L792.9,367.4L791.1,369.4L789.9,370.9L789.4,372.7L787.7,375.2L790.2,377.4L792.6,380.9M797.1,358.6L794.4,360.2L793.6,364.7L796.1,364.1L799.4,364.4L802.3,366.9L803.5,367.7L804.6,367.4M803.5,367.7L802.4,370.2L804.5,369.9M804.5,369.9L804.1,370.9L806.1,373.5L811.1,375.2L812.8,375.2L807.8,380.2L804.5,380.7L802.8,381.7L800.8,381.5L798.6,382.7L796.1,382.5L792.8,381.2L792.6,380.9L789.4,381.5L786.1,382.5L784.2,382.7M802.8,381.7L801.1,383.7L801.1,388.5L801.1,389.8L801.9,391.3M784.2,382.7L781.9,381.0L778.6,380.2L776.9,378.5L774.7,376.0L773.0,374.0M778.6,380.2L774.4,380.2L770.2,381.5L766.9,381.0L763.7,382.7L760.2,383.0L759.7,384.8L754.8,384.8L751.5,384.8L749.0,384.7M751.5,384.8L751.5,386.8L749.0,386.8M754.8,384.8L756.7,386.2L755.8,388.2L756.8,389.5L756.7,391.7L754.3,392.5L752.2,392.5L753.5,394.3L751.1,395.0M763.7,382.7L762.7,385.2L762.3,389.3L759.7,391.8L759.3,395.2L756.8,396.6L754.5,396.1L753.0,398.1M753.0,398.5L754.7,398.3L760.3,398.3L761.0,400.6L765.2,400.3L766.0,400.1L769.0,400.6L769.2,402.6L769.0,407.1L769.9,407.1L772.7,406.6L773.4,407.3L775.0,408.0L778.1,407.8L780.1,409.3L782.4,410.8L782.4,408.8L780.1,408.1L780.4,404.0L784.1,402.3M784.2,382.7L784.4,384.8L782.2,387.3L782.1,390.7L781.4,393.2L781.6,395.8L782.1,399.3L784.1,402.3L787.6,404.1L790.2,404.5L790.6,407.6L795.3,408.0L800.1,406.0M789.4,381.5L791.1,385.7L789.4,388.2L789.2,390.2L783.6,390.2L782.1,390.7M783.6,390.2L784.1,392.5L783.6,394.5L782.7,395.8L781.6,395.8M781.4,393.2L784.1,392.5M789.2,390.2L795.4,393.5L798.1,396.3M787.6,404.1L788.1,408.5L787.2,411.1L787.7,411.8L783.1,413.4L780.9,415.1L777.7,418.3L774.9,418.1M790.6,407.6L790.2,411.0L792.4,412.6L792.4,415.1L791.6,416.9L789.9,414.8L787.7,411.8M772.7,406.6L772.7,410.1L769.4,410.1L769.4,415.4L771.7,417.8L774.9,418.1M752.3,417.1L756.0,417.4L763.5,417.4L767.7,418.3L771.7,417.8M774.9,418.1L771.7,418.4L767.7,418.9L767.7,425.1L766.0,425.1L766.0,429.7L766.0,435.7L764.3,436.6L761.8,436.2L760.2,436.1M774.9,418.1L776.0,420.9L778.9,422.6L781.7,425.4L784.9,425.8M766.0,429.7L767.4,433.1L770.2,431.7L773.5,431.2L776.0,429.6L777.7,427.7L781.7,425.4M784.9,425.8L786.9,423.9L787.6,421.4L787.6,419.3L787.7,416.3L785.2,415.4L783.4,415.1L783.1,413.4M784.9,425.8L786.1,429.2L786.1,431.7L787.6,433.2M786.1,431.7L784.4,431.6L784.1,433.1L784.9,433.9L786.1,433.2M777.7,437.7L780.2,436.2L781.7,437.7L780.2,439.4L778.4,438.9L777.7,437.7" fill="none" stroke="#fff" stroke-width=".7" stroke-linejoin="round" stroke-linecap="round"/>
<circle cx="576.1" cy="319.4" r="2.3" fill="#2158b5"/>
<circle cx="599.2" cy="326.6" r="2.2" fill="#fff" stroke="#f3a25a" stroke-width="1.3"/>
</svg>
</div>
<span class="t" id="t_cpr" style="left:457.70px;top:184.57px;font-size:10.2px;color:#2f3337;letter-spacing:0.031px;transform:scaleX(1.1200)">Cloud Protection Regions</span>
<div class="dd" style="left:872.1px;top:174.4px;width:135.1px;height:30px"></div>
<span class="t" id="t_dd2" style="left:882.50px;top:184.86px;font-size:9.5px;color:#44484c;letter-spacing:-0.000px;transform:scaleX(1.0483)">All Cloud Assemblies</span>
<svg class="abs" style="left:976.5px;top:181.3px" width="16" height="16" viewBox="0 0 24 24" fill="#555"><path d="m8.200 10.400 3.800 4.200 3.800-4.200z"/></svg>
<div class="abs" style="left:446.3px;top:208px;width:572.5px;height:1px;background:#e6e6e6"></div>

<span class="t" id="t_pr" style="left:465.70px;top:444.91px;font-size:9.2px;color:#222;letter-spacing:0.014px">Primary Region</span>
<div class="abs" style="left:550.4px;top:443.4px;width:9.6px;height:9.6px;border-radius:50%;background:#2158b5"></div>
<span class="t" id="t_rr" style="left:465.70px;top:464.01px;font-size:9.2px;color:#222;letter-spacing:0.008px">Recovery Region</span>
<div class="abs" style="left:550.4px;top:462.7px;width:9.6px;height:9.6px;border-radius:50%;border:2.1px solid #f5a623"></div>
</body>
</html>
